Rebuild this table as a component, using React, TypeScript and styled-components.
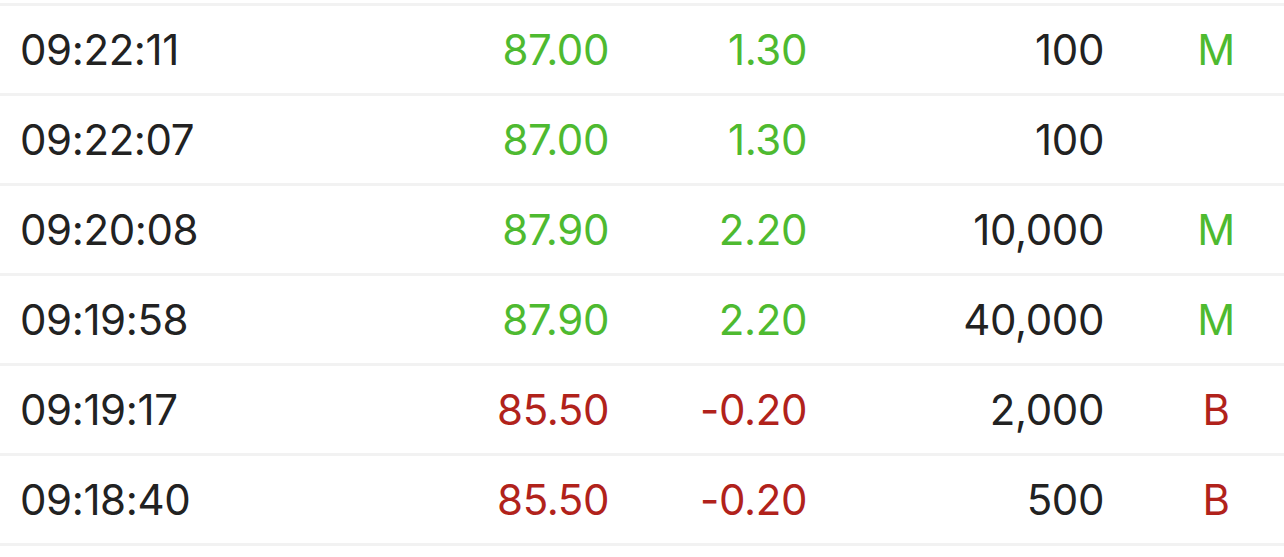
import React from "react";
import styled, { createGlobalStyle } from "styled-components";

const GlobalStyle = createGlobalStyle`
  html, body {
    margin: 0;
    padding: 0;
    background: #ffffff;
  }
  body {
    font-family: Inter, "Noto Sans", "Liberation Sans", sans-serif;
    -webkit-font-smoothing: antialiased;
  }
`;

type Tone = "up" | "down" | "plain";

const toneColor = (tone: Tone) => {
  switch (tone) {
    case "up":
      return "#4eba30";
    case "down":
      return "#b1221b";
    default:
      return "#222222";
  }
};

const List = styled.div`
  padding-top: 3px;
  border-bottom: 3px solid #f2f2f2;
  width: 1284px;
`;

const Row = styled.div`
  display: grid;
  grid-template-columns: 410px 199px 198px 297px 180px;
  align-items: center;
  height: 87px;
  border-top: 3px solid #f2f2f2;
  font-size: 42px;
  font-weight: 400;
  letter-spacing: -0.4px;
`;

const Cell = styled.div<{ $tone?: Tone; $align?: "left" | "right" | "center" }>`
  color: ${({ $tone }) => toneColor($tone ?? "plain")};
  text-align: ${({ $align }) => $align ?? "right"};
  white-space: nowrap;
`;

const TimeCell = styled(Cell)`
  padding-left: 20px;
`;

const FlagCell = styled(Cell)`
  padding-left: 44px;
`;

interface Trade {
  time: string;
  price: string;
  change: string;
  volume: string;
  flag: string;
}

const trades: Trade[] = [
  { time: "09:22:11", price: "87.00", change: "1.30", volume: "100", flag: "M" },
  { time: "09:22:07", price: "87.00", change: "1.30", volume: "100", flag: "" },
  { time: "09:20:08", price: "87.90", change: "2.20", volume: "10,000", flag: "M" },
  { time: "09:19:58", price: "87.90", change: "2.20", volume: "40,000", flag: "M" },
  { time: "09:19:17", price: "85.50", change: "-0.20", volume: "2,000", flag: "B" },
  { time: "09:18:40", price: "85.50", change: "-0.20", volume: "500", flag: "B" },
];

const App: React.FC = () => {
  return (
    <>
      <GlobalStyle />
      <List>
        {trades.map((trade, index) => {
          const tone: Tone = trade.change.startsWith("-") ? "down" : "up";
          return (
            <Row key={index}>
              <TimeCell $align="left">{trade.time}</TimeCell>
              <Cell $tone={tone}>{trade.price}</Cell>
              <Cell $tone={tone}>{trade.change}</Cell>
              <Cell>{trade.volume}</Cell>
              <FlagCell $tone={tone} $align="center">
                {trade.flag}
              </FlagCell>
            </Row>
          );
        })}
      </List>
    </>
  );
};

export default App;
